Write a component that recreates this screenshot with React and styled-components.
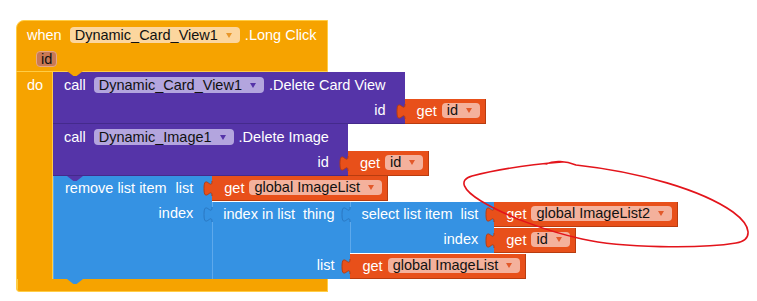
import React from "react";
import styled, { createGlobalStyle, css } from "styled-components";

const C = {
  event: "#F6A300",
  eventEdge: "#FFCD45",
  eventPill: "#FCD69E",
  eventArrow: "#E8972A",
  param: "#C97955",
  paramEdge: "#E3A788",
  purple: "#5534A8",
  purpleEdge: "#442A8C",
  purplePill: "#B3A5DE",
  blue: "#3592E3",
  blueEdge: "#2B78C2",
  blueLight: "#5EA9EC",
  get: "#E8501A",
  getEdge: "#B83C0F",
  getPill: "#F4B19C",
  getArrow: "#E2592A",
};

const Global = createGlobalStyle`
  html, body {
    margin: 0;
    padding: 0;
    background: #ffffff;
    font-family: "Liberation Sans", Arial, sans-serif;
  }
`;

const Canvas = styled.div`
  position: relative;
  width: 757px;
  height: 301px;
  box-sizing: border-box;
  padding: 20px 0 0 16px;
  overflow: hidden;
  font-size: 14.5px;
`;

const notchTab = (color, left) => css`
  &::after {
    content: "";
    position: absolute;
    left: ${left}px;
    bottom: -5px;
    width: 16px;
    height: 5px;
    background: ${color};
    clip-path: polygon(0 0, 100% 0, 60% 100%, 40% 100%);
    z-index: 2;
  }
`;

const EventBlock = styled.div`
  display: inline-flex;
  flex-direction: column;
  position: relative;
`;

const EventHeader = styled.div`
  position: relative;
  display: flex;
  flex-direction: column;
  gap: 8px;
  padding: 6px 10px 4px 10px;
  background: ${C.event};
  border: 1px solid ${C.eventEdge};
  border-top-left-radius: 8px;
  ${notchTab(C.event, 50)}
`;

const HeaderRow = styled.div`
  display: flex;
  align-items: center;
  gap: 8px;
  height: 16px;
  color: #fff;
  white-space: nowrap;
  line-height: 16px;
`;

const ParamRow = styled.div`
  display: flex;
  height: 16px;
  padding-left: 9px;
`;

const Param = styled.span`
  display: inline-flex;
  align-items: center;
  box-sizing: border-box;
  height: 16px;
  padding: 0 4px;
  border-radius: 4px;
  background: ${C.param};
  border: 1px solid ${C.paramEdge};
  color: #111;
  line-height: 14px;
`;

const EventMouth = styled.div`
  display: flex;
`;

const DoColumn = styled.div`
  box-sizing: border-box;
  width: 37px;
  flex: none;
  padding-left: 10px;
  background: ${C.event};
  border-left: 1px solid ${C.eventEdge};
  box-shadow: inset -1px 0 0 ${C.eventEdge};
  color: #fff;
  line-height: 26px;
`;

const Stack = styled.div`
  width: 0;
  display: flex;
  flex-direction: column;
  align-items: flex-start;
`;

const EventFoot = styled.div`
  height: 12px;
  background: ${C.event};
  border: 1px solid ${C.eventEdge};
  border-top: none;
  border-bottom-left-radius: 4px;
  box-shadow: inset 37px 1px 0 -36px ${C.eventEdge};
`;

const Block = styled.div`
  position: relative;
  display: grid;
  grid-template-columns: max-content max-content;
  width: max-content;
  ${(p) => p.$stmt && notchTab(p.$c, 14)}
`;

const Row = styled.div`
  display: contents;
`;

const Cell = styled.div`
  grid-column: 1;
  display: flex;
  align-items: ${(p) => (p.$dummy ? "center" : "flex-start")};
  justify-content: ${(p) => (p.$end ? "flex-end" : "flex-start")};
  gap: ${(p) => p.$gap ?? 8}px;
  box-sizing: border-box;
  min-height: ${(p) => (p.$dummy ? 26 : 25)}px;
  padding: 0 ${(p) => p.$pr ?? 19}px 0 ${(p) => p.$pl || 10}px;
  background: ${(p) => p.$c};
  color: #fff;
  line-height: 25px;
  white-space: nowrap;
  box-shadow: ${(p) =>
    [p.$light && `inset 1px 0 0 ${p.$light}`, p.$last && `inset 0 -1px 0 ${p.$edge}`]
      .filter(Boolean)
      .join(", ") || "none"};
`;

const Words = styled.span`
  margin-left: 1px;
`;

const Slot = styled.div`
  grid-column: 2;
  display: flex;
  flex-direction: column;
  align-items: flex-start;
  padding-top: ${(p) => (p.$gap ? 1 : 0)}px;
`;

const PillBox = styled.span`
  display: inline-flex;
  align-items: center;
  box-sizing: border-box;
  height: ${(p) => p.$h}px;
  padding: 0 8px 0 5px;
  margin-right: -3px;
  border-radius: 4px;
  background: ${(p) => p.$bg};
  color: #111;
  line-height: ${(p) => p.$h}px;
  white-space: nowrap;
`;

const ArrowSvg = styled.svg`
  margin-left: 8px;
  flex: none;
`;

const Pill = ({ bg, arrow, h = 16, children }) => (
  <PillBox $bg={bg} $h={h}>
    {children}
    <ArrowSvg width="6" height="5" viewBox="0 0 6 5">
      <polygon points="0,0 6,0 3,5" fill={arrow} />
    </ArrowSvg>
  </PillBox>
);

const TabSvg = styled.svg`
  position: absolute;
  left: -8px;
  top: 0;
  overflow: visible;
  z-index: 1;
`;

const Tab = ({ fill, stroke }) => (
  <TabSvg width="9" height="25" viewBox="-8 0 9 25">
    <path d="M1 5 L0 5 C0 15 -8 -3 -8 12.5 S0 10 0 20 L1 20 Z" fill={fill} />
    <path d="M0 5 C0 15 -8 -3 -8 12.5 S0 10 0 20" fill="none" stroke={stroke} strokeWidth="1" />
  </TabSvg>
);

const GetBox = styled.div`
  position: relative;
  display: flex;
  align-items: center;
  gap: 5px;
  box-sizing: border-box;
  height: 25px;
  padding: 0 8px 1px 12px;
  background: ${C.get};
  border-right: 1px solid ${C.getEdge};
  border-bottom: 1px solid ${C.getEdge};
  color: #fff;
  white-space: nowrap;
`;

const Get = ({ name }) => (
  <GetBox>
    <Tab fill={C.get} stroke={C.getEdge} />
    get
    <Pill bg={C.getPill} arrow={C.getArrow} h={15}>
      {name}
    </Pill>
  </GetBox>
);

const Scribble = styled.svg`
  position: absolute;
  left: 0;
  top: 0;
  pointer-events: none;
  z-index: 10;
`;

export default function App() {
  return (
    <>
      <Global />
      <Canvas>
        <EventBlock>
          <EventHeader>
            <HeaderRow>
              when
              <Pill bg={C.eventPill} arrow={C.eventArrow}>
                Dynamic_Card_View1
              </Pill>
              .Long Click
            </HeaderRow>
            <ParamRow>
              <Param>id</Param>
            </ParamRow>
          </EventHeader>

          <EventMouth>
            <DoColumn>do</DoColumn>
            <Stack>
              <Block $stmt $c={C.purple}>
                <Row>
                  <Cell $c={C.purple} $dummy $pl={11}>
                    call
                    <Pill bg={C.purplePill} arrow={C.purple}>
                      Dynamic_Card_View1
                    </Pill>
                    .Delete Card View
                  </Cell>
                </Row>
                <Row>
                  <Cell $c={C.purple} $end $last $edge={C.purpleEdge}>
                    id
                  </Cell>
                  <Slot $gap>
                    <Get name="id" />
                  </Slot>
                </Row>
              </Block>

              <Block $stmt $c={C.purple}>
                <Row>
                  <Cell $c={C.purple} $dummy $pl={11}>
                    call
                    <Pill bg={C.purplePill} arrow={C.purple}>
                      Dynamic_Image1
                    </Pill>
                    .Delete Image
                  </Cell>
                </Row>
                <Row>
                  <Cell $c={C.purple} $end $last $edge={C.purpleEdge}>
                    id
                  </Cell>
                  <Slot $gap>
                    <Get name="id" />
                  </Slot>
                </Row>
              </Block>

              <Block $stmt $c={C.blue}>
                <Row>
                  <Cell $c={C.blue} $pl={11} $light={C.blueLight}>
                    <Words>remove list item</Words>
                    <Words>list</Words>
                  </Cell>
                  <Slot>
                    <Get name="global ImageList" />
                  </Slot>
                </Row>
                <Row>
                  <Cell $c={C.blue} $end $light={C.blueLight}>
                    index
                  </Cell>
                  <Slot $gap>
                    <Block $c={C.blue}>
                      <Tab fill={C.blue} stroke={C.blueEdge} />
                      <Row>
                        <Cell $c={C.blue} $gap={7} $pr={16} $light={C.blueLight}>
                          <Words>index in list</Words>
                          <Words>thing</Words>
                        </Cell>
                        <Slot>
                          <Block $c={C.blue}>
                            <Tab fill={C.blue} stroke={C.blueEdge} />
                            <Row>
                              <Cell $c={C.blue} $gap={7} $pr={16} $light={C.blueLight}>
                                <Words>select list item</Words>
                                <Words>list</Words>
                              </Cell>
                              <Slot>
                                <Get name="global ImageList2" />
                              </Slot>
                            </Row>
                            <Row>
                              <Cell $c={C.blue} $end $pr={16} $light={C.blueLight}>
                                index
                              </Cell>
                              <Slot $gap>
                                <Get name="id" />
                              </Slot>
                            </Row>
                          </Block>
                        </Slot>
                      </Row>
                      <Row>
                        <Cell $c={C.blue} $end $pr={16} $light={C.blueLight}>
                          list
                        </Cell>
                        <Slot $gap>
                          <Get name="global ImageList" />
                        </Slot>
                      </Row>
                    </Block>
                  </Slot>
                </Row>
              </Block>
            </Stack>
          </EventMouth>

          <EventFoot />
        </EventBlock>

        <Scribble width="757" height="301" viewBox="0 0 757 301">
          <path
            d="M546 164 C554 160 566 161 576 165 C640 172 702 190 733 212 C752 226 753 240 736 243 C700 249 622 248 582 239 C546 231 506 216 481 201 C463 190 458 180 472 176 C495 170 525 165 562 162"
            fill="none"
            stroke="#E3141B"
            strokeWidth="1.6"
            strokeLinecap="round"
            strokeLinejoin="round"
          />
        </Scribble>
      </Canvas>
    </>
  );
}
